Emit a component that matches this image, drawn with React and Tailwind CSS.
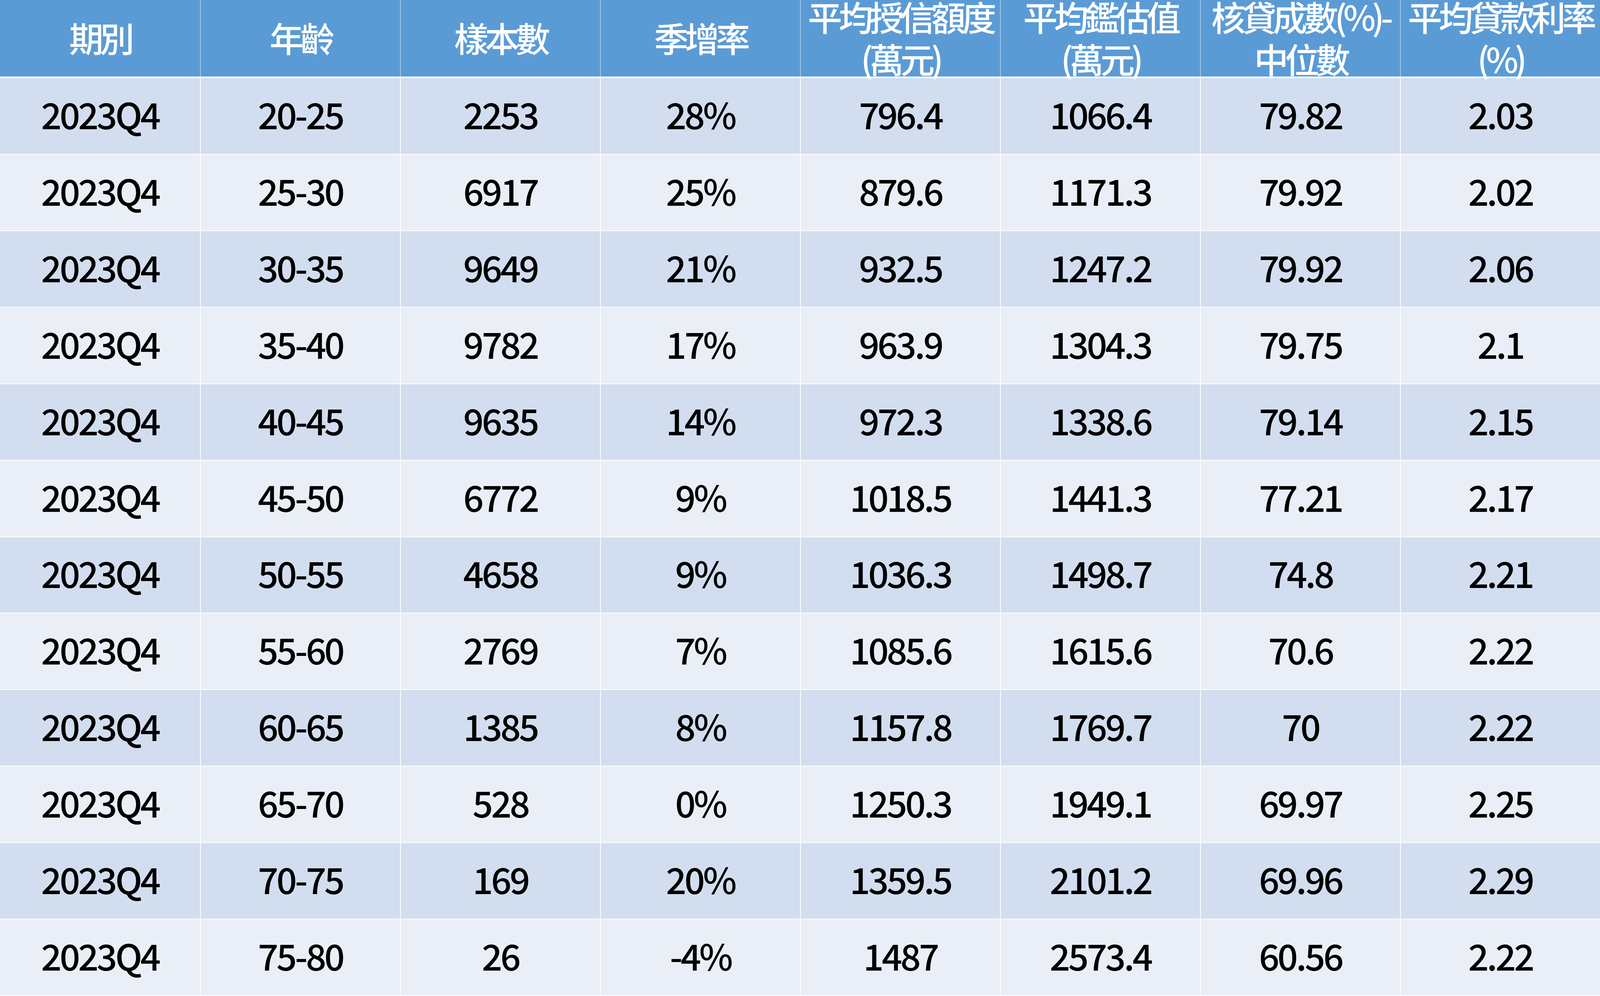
import React from "react";

const headers = [
  ["期別"],
  ["年齡"],
  ["樣本數"],
  ["季增率"],
  ["平均授信額度", "(萬元)"],
  ["平均鑑估值", "(萬元)"],
  ["核貸成數(%)-", "中位數"],
  ["平均貸款利率", "(%)"],
];

const rows = [
  ["2023Q4", "20-25", "2253", "28%", "796.4", "1066.4", "79.82", "2.03"],
  ["2023Q4", "25-30", "6917", "25%", "879.6", "1171.3", "79.92", "2.02"],
  ["2023Q4", "30-35", "9649", "21%", "932.5", "1247.2", "79.92", "2.06"],
  ["2023Q4", "35-40", "9782", "17%", "963.9", "1304.3", "79.75", "2.1"],
  ["2023Q4", "40-45", "9635", "14%", "972.3", "1338.6", "79.14", "2.15"],
  ["2023Q4", "45-50", "6772", "9%", "1018.5", "1441.3", "77.21", "2.17"],
  ["2023Q4", "50-55", "4658", "9%", "1036.3", "1498.7", "74.8", "2.21"],
  ["2023Q4", "55-60", "2769", "7%", "1085.6", "1615.6", "70.6", "2.22"],
  ["2023Q4", "60-65", "1385", "8%", "1157.8", "1769.7", "70", "2.22"],
  ["2023Q4", "65-70", "528", "0%", "1250.3", "1949.1", "69.97", "2.25"],
  ["2023Q4", "70-75", "169", "20%", "1359.5", "2101.2", "69.96", "2.29"],
  ["2023Q4", "75-80", "26", "-4%", "1487", "2573.4", "60.56", "2.22"],
];

export default function App() {
  return (
    <div
      className="w-full h-[2551px] flex flex-col overflow-hidden bg-white"
      style={{ fontFamily: '"Noto Sans CJK TC", "Noto Sans", sans-serif' }}
    >
      <div className="relative z-10 h-[200px] shrink-0 grid grid-cols-8 grid-rows-1 bg-[#5b9bd5] border-b-4 border-white">
        {headers.map((h, i) => (
          <div
            key={i}
            className={
              "min-h-0 flex flex-col items-center justify-center text-white text-[88px] font-medium leading-[108px] tracking-[-9px] pb-[6px] " +
              (i > 0 ? "border-l-2 border-[#a3c6ea]" : "")
            }
          >
            {h.map((line, j) => (
              <span key={j} className="whitespace-nowrap">
                {line}
              </span>
            ))}
          </div>
        ))}
      </div>
      {rows.map((r, ri) => (
        <div
          key={ri}
          className={
            "flex-1 grid grid-cols-8 grid-rows-1 border-b-2 border-white " +
            (ri % 2 === 0 ? "bg-[#d2deef]" : "bg-[#eaeff7]")
          }
        >
          {r.map((c, ci) => (
            <div
              key={ci}
              className={
                "min-h-0 flex items-center justify-center text-black text-[92px] font-medium leading-none tracking-[-5px] pb-[12px] " +
                (ci > 0 ? "border-l-2 border-white" : "")
              }
            >
              {c}
            </div>
          ))}
        </div>
      ))}
    </div>
  );
}
